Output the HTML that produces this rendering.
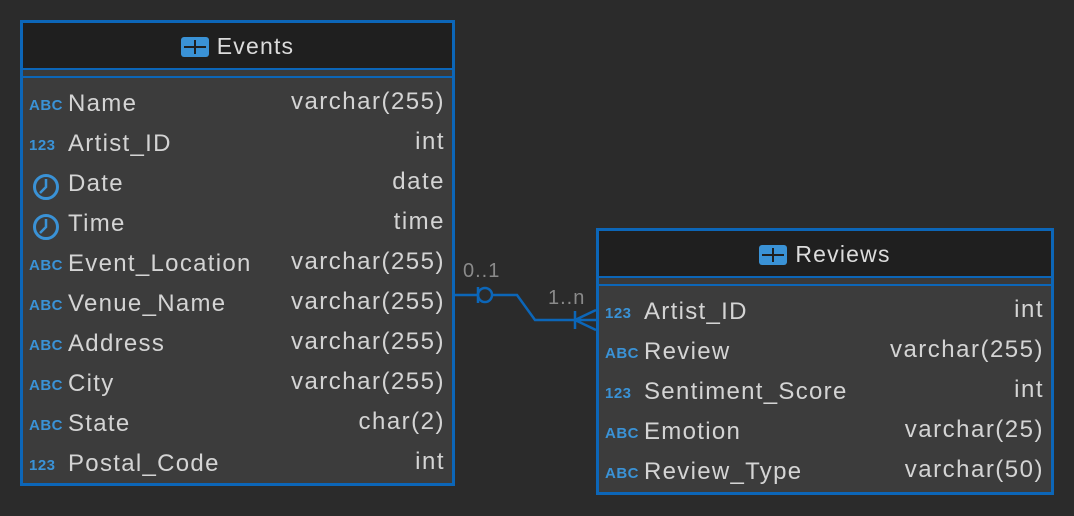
<!DOCTYPE html>
<html><head><style>
*{margin:0;padding:0;box-sizing:border-box}
body{width:1074px;height:516px;background:#2b2b2b;position:relative;overflow:hidden;font-family:"Liberation Sans",sans-serif;color:#d4d4d4}
.box{position:absolute;border:3px solid #0c66b8;background:#3c3c3c}
.hd{height:47px;background:#1f1f1f;border-bottom:2px solid #0c66b8;display:flex;align-items:center;justify-content:center;font-size:23px;letter-spacing:1.2px;color:#dcdcdc;padding-top:2px}
.gap{height:8px;background:#3a3a3a;border-bottom:2px solid #0c66b8}
.ico{display:inline-block;width:28px;height:20px;background:#3a92d6;border-radius:3px;margin-right:8px;position:relative}
.ico:before{content:"";position:absolute;left:3px;right:3px;top:9px;height:2px;background:#1f1f1f}
.ico:after{content:"";position:absolute;top:3px;bottom:3px;left:13px;width:2px;background:#1f1f1f}
.row{position:absolute;left:0;right:0;height:40px;font-size:24px;letter-spacing:1.3px}
.row .t{position:absolute;left:6px;top:10px;width:36px;font-size:15px;font-weight:bold;letter-spacing:0.5px;color:#3a92d6}
.row .n{position:absolute;left:45px;top:3px}
.row .ty{position:absolute;right:7px;top:1px;letter-spacing:1.5px}
.clk{position:absolute;left:9px;top:6px}
.lbl{position:absolute;color:#8a8a8a;font-size:20px;letter-spacing:1px}
</style></head><body>
<div class="box" style="left:20px;top:20px;width:435px;height:466px">
<div class="hd"><span class="ico"></span>Events</div><div class="gap"></div>
<div class="row" style="top:64px"><span class="t">ABC</span><span class="n">Name</span><span class="ty">varchar(255)</span></div>
<div class="row" style="top:104px"><span class="t">123</span><span class="n">Artist_ID</span><span class="ty">int</span></div>
<div class="row" style="top:144px"><svg class="clk" width="28" height="28" viewBox="0 0 28 28"><circle cx="14" cy="14" r="11.5" fill="none" stroke="#3a92d6" stroke-width="3"/><path d="M14 6V14L8 20" fill="none" stroke="#3a92d6" stroke-width="2.5"/></svg><span class="n">Date</span><span class="ty">date</span></div>
<div class="row" style="top:184px"><svg class="clk" width="28" height="28" viewBox="0 0 28 28"><circle cx="14" cy="14" r="11.5" fill="none" stroke="#3a92d6" stroke-width="3"/><path d="M14 6V14L8 20" fill="none" stroke="#3a92d6" stroke-width="2.5"/></svg><span class="n">Time</span><span class="ty">time</span></div>
<div class="row" style="top:224px"><span class="t">ABC</span><span class="n">Event_Location</span><span class="ty">varchar(255)</span></div>
<div class="row" style="top:264px"><span class="t">ABC</span><span class="n">Venue_Name</span><span class="ty">varchar(255)</span></div>
<div class="row" style="top:304px"><span class="t">ABC</span><span class="n">Address</span><span class="ty">varchar(255)</span></div>
<div class="row" style="top:344px"><span class="t">ABC</span><span class="n">City</span><span class="ty">varchar(255)</span></div>
<div class="row" style="top:384px"><span class="t">ABC</span><span class="n">State</span><span class="ty">char(2)</span></div>
<div class="row" style="top:424px"><span class="t">123</span><span class="n">Postal_Code</span><span class="ty">int</span></div>
</div>
<div class="box" style="left:596px;top:228px;width:458px;height:267px">
<div class="hd"><span class="ico"></span>Reviews</div><div class="gap"></div>
<div class="row" style="top:64px"><span class="t">123</span><span class="n">Artist_ID</span><span class="ty">int</span></div>
<div class="row" style="top:104px"><span class="t">ABC</span><span class="n">Review</span><span class="ty">varchar(255)</span></div>
<div class="row" style="top:144px"><span class="t">123</span><span class="n">Sentiment_Score</span><span class="ty">int</span></div>
<div class="row" style="top:184px"><span class="t">ABC</span><span class="n">Emotion</span><span class="ty">varchar(25)</span></div>
<div class="row" style="top:224px"><span class="t">ABC</span><span class="n">Review_Type</span><span class="ty">varchar(50)</span></div>
</div>
<svg style="position:absolute;left:0;top:0" width="1074" height="516">
<g stroke="#0c66b8" stroke-width="2.5" fill="none">
<path d="M455 295H478M478 287V303"/>
<circle cx="485" cy="295" r="7"/>
<path d="M492 295H517L535 320H596M575 311V329M596 310L575 320L596 330"/>
</g></svg>
<div class="lbl" style="left:463px;top:260px">0..1</div>
<div class="lbl" style="left:548px;top:287px">1..n</div>
</body></html>
